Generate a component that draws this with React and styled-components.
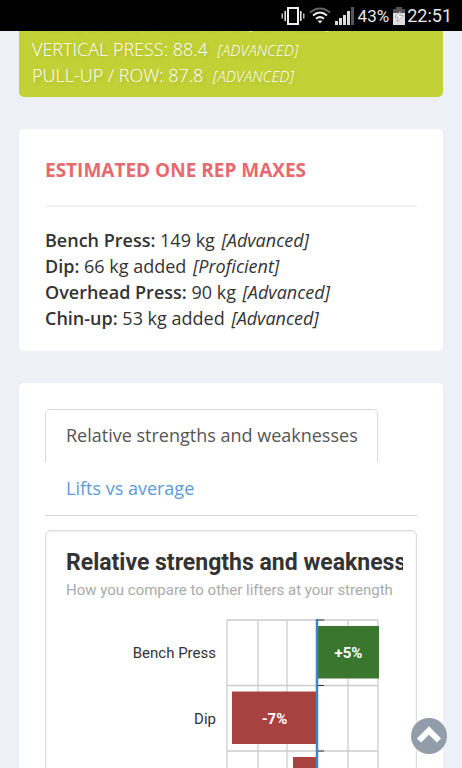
import React from "react";
import styled, { createGlobalStyle } from "styled-components";

const GlobalStyle = createGlobalStyle`
  * {
    box-sizing: border-box;
  }

  body {
    margin: 0;
    background: #edf1f7;
    color: #333;
    font-family: "Open Sans", sans-serif;
    font-size: 18px;
    line-height: 26px;
  }
`;

const Screen = styled.div`
  display: flex;
  flex-direction: column;
  height: 100vh;
  overflow: hidden;
`;

const StatusBar = styled.header`
  display: flex;
  flex: none;
  align-items: center;
  justify-content: flex-end;
  gap: 4px;
  height: 31px;
  padding: 0 10px;
  background: #000;
  color: #e8e8e8;
  font-family: Roboto, sans-serif;

  svg {
    display: block;
    flex: none;
  }
`;

const Battery = styled.span`
  font-size: 17px;
`;

const Clock = styled.time`
  margin-left: -2px;
  font-size: 18px;
`;

const Page = styled.main`
  flex: 1;
  min-height: 0;
  overflow: hidden;
`;

const Content = styled.div`
  display: flex;
  flex-direction: column;
  gap: 32px;
  margin-top: -21px;
  padding: 0 19px;
`;

const ScoreCard = styled.section`
  padding: 0 13px 9px;
  border-radius: 5px;
  background: #c2d136;
  color: #fff;
  font-weight: 300;
  text-transform: uppercase;
  text-shadow: 2px 2px 4px rgba(0, 0, 0, 0.12);
`;

const Card = styled.section`
  padding: 26px 26px 20px;
  border-radius: 5px;
  background: #fff;
`;

const CardTitle = styled.h2`
  margin: 0 0 20px;
  padding: 2px 0 22px;
  border-bottom: 2px solid #f1f1f1;
  color: #e66a6d;
  font-size: 19px;
  font-weight: 700;
  line-height: 26px;
  text-transform: uppercase;
`;

const Level = styled.em`
  margin-left: ${(props) => (props.$small ? "5px" : "2px")};
  font-size: ${(props) => (props.$small ? "15px" : "18px")};
  line-height: 1;
`;

const Lift = styled.strong`
  font-weight: 600;
`;

const Tabs = styled.nav`
  display: flex;
  flex-direction: column;
  align-items: flex-start;
  margin-bottom: 14px;
  border-bottom: 1px solid #d4d4d4;
`;

const Tab = styled.a`
  height: 53px;
  padding: 12px 19px 12px 20px;
  border: 1px solid ${(props) => (props.$active ? "#d8d8d8" : "transparent")};
  border-bottom: 0;
  border-radius: 5px 5px 0 0;
  color: ${(props) => (props.$active ? "#555" : "#5b9bd5")};
  text-decoration: none;
`;

const ChartBox = styled.div`
  padding: 16px 13px 20px 20px;
  border: 1px solid #ddd;
  border-radius: 5px;
  box-shadow: inset 0 1px 3px rgba(0, 0, 0, 0.08);
  font-family: Roboto, sans-serif;
`;

const ChartTitle = styled.h3`
  margin: 0;
  overflow: hidden;
  color: #333;
  font-size: 23px;
  font-weight: 700;
  line-height: 32px;
  white-space: nowrap;
`;

const ChartSubtitle = styled.p`
  margin: 0 0 8px;
  overflow: hidden;
  color: #aaa;
  font-size: 15px;
  line-height: 23px;
  white-space: nowrap;
`;

const Chart = styled.svg`
  display: block;
  font-family: Roboto, sans-serif;
  font-size: 15px;
`;

const TopButton = styled.button`
  position: fixed;
  right: 15px;
  bottom: 14px;
  width: 36px;
  height: 36px;
  padding: 0;
  border: 0;
  border-radius: 50%;
  background: #929da9;

  svg {
    display: block;
  }
`;

const scores = [
  { name: "Horizontal press", value: "87.9", level: "Advanced" },
  { name: "Vertical press", value: "88.4", level: "Advanced" },
  { name: "Pull-up / row", value: "87.8", level: "Advanced" },
];

const maxes = [
  { name: "Bench Press", value: "149 kg", level: "Advanced" },
  { name: "Dip", value: "66 kg added", level: "Proficient" },
  { name: "Overhead Press", value: "90 kg", level: "Advanced" },
  { name: "Chin-up", value: "53 kg added", level: "Advanced" },
];

const bars = [
  { name: "Bench Press", value: 5, x: 252, width: 61 },
  { name: "Dip", value: -7, x: 166, width: 85 },
  { name: "Overhead Press", value: -2, x: 227, width: 24 },
];

const gridX = [161, 192, 221, 282, 312];
const ROW = 65.5;

function VibrateIcon() {
  return (
    <svg width="24" height="20" viewBox="0 0 24 20" fill="none" stroke="#eee">
      <rect x="7" y="2" width="10" height="16" strokeWidth="2" />
      <path d="M4.2 5v10M19.8 5v10" strokeWidth="1.5" />
      <path d="M1.2 7.500v5M22.800 7.500v5" strokeWidth="1.2" />
    </svg>
  );
}

function WifiIcon() {
  return (
    <svg width="22" height="20" viewBox="0 0 22 20" fill="none" strokeWidth="2">
      <path d="M1 6.500Q11 -1.500 21 6.500" stroke="#666" />
      <path d="M4 9.500Q11 3.500 18 9.500" stroke="#eee" />
      <path d="M7 12.800Q11 9.500 15 12.800" stroke="#eee" />
      <path d="M8.500 14.500h5L11 17.500z" fill="#eee" />
    </svg>
  );
}

function SignalIcon() {
  return (
    <svg width="19" height="20" viewBox="0 0 19 20" fill="#ddd">
      <rect x="0" y="15" width="3" height="4" />
      <rect x="4" y="12" width="3" height="7" />
      <rect x="8" y="9" width="3" height="10" />
      <rect x="12" y="5" width="3" height="14" />
      <rect x="16" y="1" width="3" height="18" fill="#555" />
    </svg>
  );
}

function BatteryIcon() {
  return (
    <svg width="12" height="20" viewBox="0 0 12 20">
      <path d="M3 1h6v2h3v4H0V3h3z" fill="#555" />
      <path d="M0 7h12v12H0z" fill="#ddd" />
      <path d="M7.500 5L2 11h3.500L4 16l6-6.500H6.500z" fill="#fff" stroke="#888" strokeWidth="0.6" />
    </svg>
  );
}

function StrengthChart() {
  return (
    <Chart width="100%" height="210" role="img" aria-label="Relative strengths and weaknesses">
      <g stroke="#ccc" strokeWidth="1.300">
        {gridX.map((x) => (
          <line key={x} x1={x} x2={x} y1="10" y2="210" />
        ))}
        {bars.map((bar, i) => (
          <line key={bar.name} x1="161" x2="312" y1={10 + i * ROW} y2={10 + i * ROW} />
        ))}
      </g>
      {bars.map((bar, i) => (
        <g key={bar.name}>
          <line x1="251" x2="258" y1={10 + i * ROW} y2={10 + i * ROW} stroke="#333" />
          <rect
            x={bar.x}
            y={16 + i * ROW}
            width={bar.width}
            height="52.500"
            fill={bar.value > 0 ? "#3a762e" : "#a84241"}
          />
          <text x="150" y={48 + i * ROW} fill="#333" textAnchor="end">
            {bar.name}
          </text>
          <text
            x={bar.x + bar.width / 2}
            y={48 + i * ROW}
            fill="#fff"
            fontWeight="700"
            textAnchor="middle"
          >
            {bar.value > 0 ? "+" : ""}
            {bar.value}%
          </text>
        </g>
      ))}
      <line x1="251" x2="251" y1="9" y2="210" stroke="#3d86c0" strokeWidth="2.500" />
    </Chart>
  );
}

function App() {
  return (
    <Screen>
      <GlobalStyle />
      <StatusBar>
        <VibrateIcon />
        <WifiIcon />
        <SignalIcon />
        <Battery>43%</Battery>
        <BatteryIcon />
        <Clock>22:51</Clock>
      </StatusBar>
      <Page>
        <Content>
          <ScoreCard>
            {scores.map((score) => (
              <div key={score.name}>
                {score.name}: {score.value} <Level $small>[{score.level}]</Level>
              </div>
            ))}
          </ScoreCard>
          <Card>
            <CardTitle>Estimated one rep maxes</CardTitle>
            {maxes.map((max) => (
              <div key={max.name}>
                <Lift>{max.name}:</Lift> {max.value} <Level>[{max.level}]</Level>
              </div>
            ))}
          </Card>
          <Card>
            <Tabs>
              <Tab href="#relative" $active>
                Relative strengths and weaknesses
              </Tab>
              <Tab href="#average">Lifts vs average</Tab>
            </Tabs>
            <ChartBox>
              <ChartTitle>Relative strengths and weaknesses</ChartTitle>
              <ChartSubtitle>How you compare to other lifters at your strength</ChartSubtitle>
              <StrengthChart />
            </ChartBox>
          </Card>
        </Content>
      </Page>
      <TopButton aria-label="Back to top">
        <svg width="36" height="36" viewBox="0 0 36 36" fill="none">
          <path d="M8 22.500L18 12.500L28 22.500" stroke="#fff" strokeWidth="6" />
        </svg>
      </TopButton>
    </Screen>
  );
}

export default App;
